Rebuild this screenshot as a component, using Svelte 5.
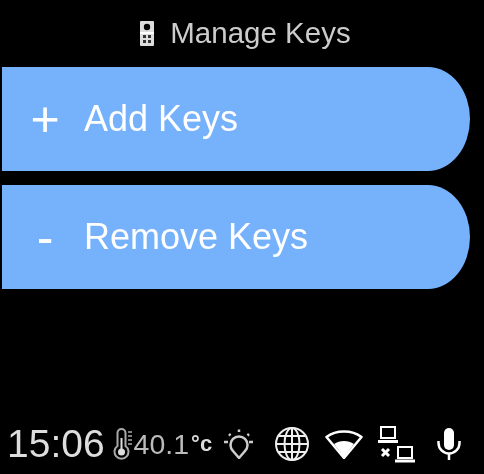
<script>
  const rows = [
    { sign: '+', label: 'Add Keys' },
    { sign: '-', label: 'Remove Keys' }
  ];
</script>

<div class="screen">
  <header class="title">
    <svg class="remote" width="14" height="25" viewBox="0 0 14 25">
      <rect x="0" y="0" width="14" height="25" rx="1" fill="#ddd" />
      <circle cx="7" cy="6" r="3.200" fill="#000" />
      <rect x="0" y="11" width="14" height="2" fill="#fff" />
      <rect x="3" y="14" width="3" height="3" fill="#333" />
      <rect x="8" y="14" width="3" height="3" fill="#333" />
      <rect x="3" y="19" width="3" height="3" fill="#333" />
      <rect x="8" y="19" width="3" height="3" fill="#333" />
    </svg>
    <span>Manage Keys</span>
  </header>

  <main class="rows">
    {#each rows as row}
      <button class="row">
        <span class="sign">{row.sign}</span>
        <span class="label">{row.label}</span>
      </button>
    {/each}
  </main>

  <footer class="status">
    <span class="time">15:06</span>
    <svg class="thermo" width="20" height="32" viewBox="0 0 20 32" fill="none" stroke="#aaa" stroke-width="2">
      <path d="M4.500 5a4 4 0 0 1 8 0V18a7 7 0 1 1-8 0z" />
      <circle cx="8.500" cy="24" r="3.500" fill="#ddd" stroke="none" />
      <path d="M8.500 10v14" stroke="#ddd" />
      <path d="M15 4h4M15 8h4M15 12h4M15 16h4" stroke-width="1.500" />
    </svg>
    <span class="temp">40.1</span>
    <span class="unit">°c</span>
    <svg class="bulb" width="30" height="30" viewBox="0 0 30 30" fill="none" stroke="#ccc" stroke-width="2.500">
      <path d="M9 22a8.500 8.500 0 1 1 12 0L15 29z" stroke-linejoin="round" />
      <path d="M15 0.500v2.500M5 5l1.500 1.500M25 5l-1.500 1.500M0 13h4M25 13h4" />
    </svg>
    <svg class="globe" width="34" height="34" viewBox="0 0 34 34" fill="none" stroke="#eee" stroke-width="2">
      <circle cx="17" cy="17" r="16" />
      <ellipse cx="17" cy="17" rx="7.500" ry="16" />
      <path d="M17 1v32M1 17h32M3.500 9h27M3.500 25h27" />
    </svg>
    <svg class="wifi" width="38" height="30" viewBox="0 0 38 30">
      <path d="M1.500 8C11 .5 27 .5 36.500 8L19 29z" fill="none" stroke="#fff" stroke-width="2.500" stroke-linejoin="round" />
      <path d="M9 15c6-4 14-4 20 0L19 28z" fill="#fff" />
    </svg>
    <svg class="net" width="38" height="37" viewBox="0 0 38 37" fill="none" stroke="#fff" stroke-width="2">
      <rect x="4" y="1" width="14" height="11" />
      <path d="M1 15.500h20" stroke-width="3" />
      <rect x="21" y="21" width="14" height="11" />
      <path d="M18 35h20" stroke-width="3" />
      <path d="M5 23l7 7M12 23l-7 7" stroke-width="3" />
    </svg>
    <svg class="mic" width="24" height="32" viewBox="0 0 24 32" fill="none" stroke="#fff">
      <rect x="7" y="0" width="10" height="22" rx="5" fill="#fff" stroke="none" />
      <path d="M1.500 13v2a10.500 10.500 0 0 0 21 0v-2" stroke-width="2.500" />
      <path d="M12 26v6" stroke-width="2.500" />
    </svg>
  </footer>
</div>

<style>
  :global(body) {
    margin: 0;
    background: #000;
  }

  .screen {
    width: 484px;
    height: 474px;
    box-sizing: border-box;
    display: flex;
    flex-direction: column;
    background: #000;
    color: #fff;
    font-family: "Liberation Sans", Arial, sans-serif;
    overflow: hidden;
  }

  .title {
    height: 66px;
    margin-bottom: 1px;
    display: flex;
    align-items: center;
    justify-content: center;
    gap: 16px;
    padding-left: 7px;
    font-size: 29.500px;
    color: #ccc;
    filter: blur(0.5px);
  }

  .rows {
    display: flex;
    flex-direction: column;
    gap: 14px;
    padding-left: 2px;
  }

  .row {
    width: 468px;
    height: 104px;
    box-sizing: border-box;
    display: flex;
    align-items: center;
    padding: 0 0 0 28px;
    border: 0;
    border-radius: 0 42px 42px 0 / 0 52px 52px 0;
    background: #76b1fc;
    color: #fff;
    font: inherit;
    text-align: left;
  }

  .sign {
    width: 30px;
    margin-right: 24px;
    font-size: 50px;
    line-height: 1;
    text-align: center;
    filter: blur(0.5px);
  }

  .label {
    font-size: 36px;
    filter: blur(0.5px);
  }

  .status {
    margin-top: auto;
    height: 60px;
    display: flex;
    align-items: center;
    padding-left: 7px;
    color: #ddd;
    filter: blur(0.6px);
  }

  .time {
    font-size: 39px;
  }

  .thermo {
    margin-left: 8.500px;
  }

  .temp {
    margin-left: 0.500px;
    font-size: 28.500px;
    color: #bbb;
  }

  .unit {
    margin-left: 2px;
    font-size: 22px;
    font-weight: bold;
  }

  .bulb {
    margin-left: 12px;
  }

  .globe {
    margin-left: 21px;
  }

  .wifi {
    margin-left: 16px;
  }

  .net {
    margin-left: 14px;
  }

  .mic {
    margin-left: 22px;
  }
</style>
